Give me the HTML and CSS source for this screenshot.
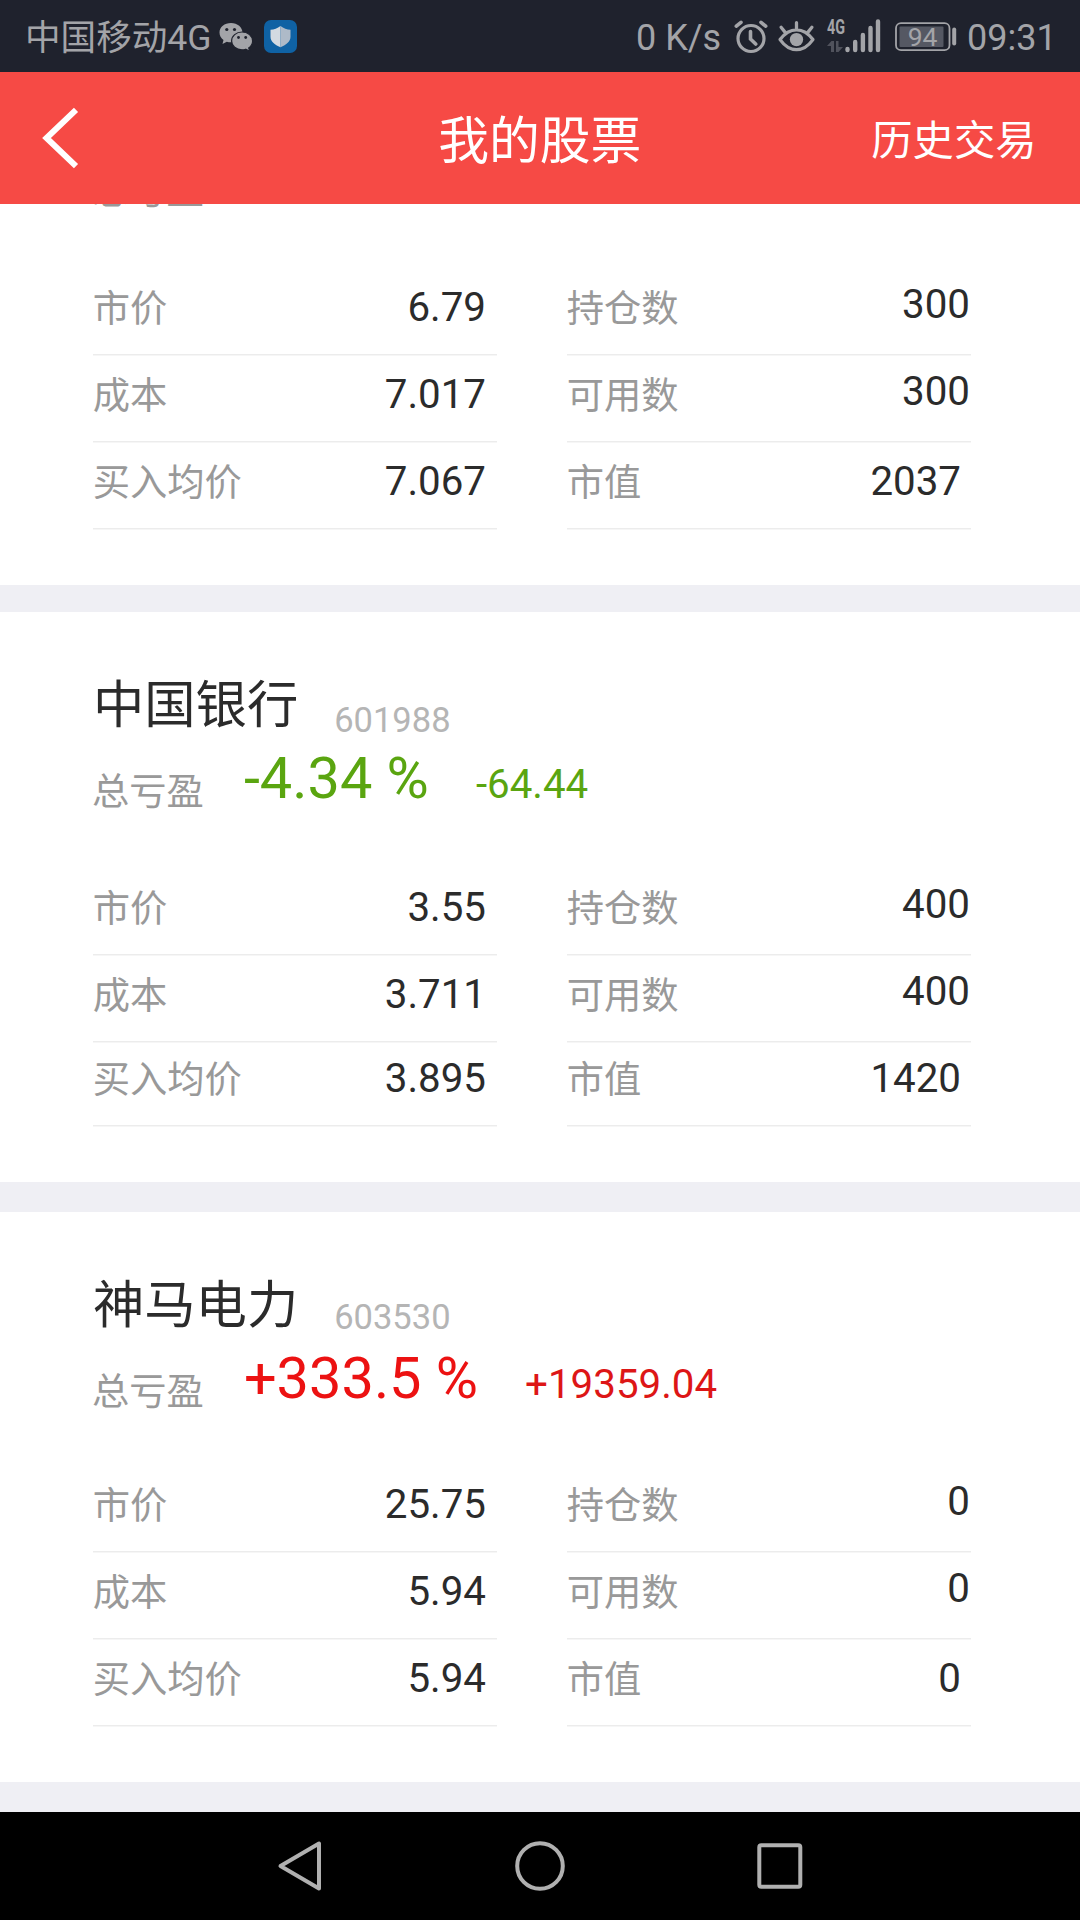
FILE: index.html
```html
<!DOCTYPE html>
<html lang="zh-CN">
<head>
<meta charset="utf-8">
<title>我的股票</title>
<link rel="stylesheet" href="styles.css">
</head>
<body>
<div class="screen">
  <header class="status">
    <div class="status-left">
      <span class="carrier">中国移动4G</span>
      <svg class="wechat" width="34" height="30" viewBox="0 0 34 30">
        <path fill="#a3a4a8" d="M12 1C5.500 1 .5 5.100 .5 10.500c0 3 1.500 5.600 4 7.400L3.500 22l4.300-2.300c1.300.4 2.800.6 4.200.6C18.500 20.300 23.500 16 23.500 10.700S18.500 1 12 1z"/>
        <path fill="#a3a4a8" stroke="#1f222d" stroke-width="1.200" d="M23 10c-5.800 0-10.400 4-10.400 8.900s4.600 8.900 10.400 8.900c1.300 0 2.600-.2 3.700-.6l4 2-1-3.300c2.400-1.700 3.900-4.200 3.900-7C33.600 14 28.800 10 23 10z"/>
        <g fill="#1f222d"><circle cx="7.800" cy="7.500" r="1.600"/><circle cx="15.500" cy="7.500" r="1.600"/><circle cx="19.500" cy="15.500" r="1.400"/><circle cx="26.700" cy="15.500" r="1.400"/></g>
      </svg>
      <svg class="shield" width="33" height="33" viewBox="0 0 33 33">
        <rect width="33" height="33" rx="7" fill="#0f62a4"/>
        <path fill="#d3dae1" d="M16.500 6C13.500 8.500 10 9.500 6.500 9.700v7c0 4.700 4 8 10 10.600z"/>
        <path fill="#aebac8" d="M16.500 6c3 2.500 6.500 3.500 10 3.700v7c0 4.700-4 8-10 10.600z"/>
      </svg>
    </div>
    <div class="status-right">
      <span class="speed">0 K/s</span>
      <svg class="alarm" width="34" height="34" viewBox="0 0 34 34" fill="none" stroke="#a3a4a8" stroke-linecap="round">
        <circle cx="17" cy="18.500" r="13" stroke-width="3.200"/>
        <path d="M2.300 6.200 7 2.300M31.700 6.200 27 2.300M16.500 11.500v7.500l5.200 5" stroke-width="3.600"/>
      </svg>
      <svg class="eye" width="37" height="33" viewBox="0 0 36 32">
        <path d="M2 19Q9 9.500 18 9.500T34 19Q27 28.800 18 28.800T2 19zM18 9V2.500M7 12 3 7M29 12l4-5" fill="none" stroke="#a3a4a8" stroke-width="3.200" stroke-linecap="round" stroke-linejoin="round"/>
        <circle cx="18" cy="19" r="6.500" fill="#a3a4a8"/>
      </svg>
      <svg class="signal" width="54" height="34" viewBox="0 0 54 34">
        <text class="net" x="0" y="15" textLength="18" lengthAdjust="spacingAndGlyphs">4G</text>
        <path fill="#50525c" d="M0 27l4.500-5H7v11H4v-6zM9 22h2.500v6H16l-4.500 5H9z"/>
        <path stroke="#a3a4a8" stroke-width="4.400" stroke-linecap="round" d="M20.500 30v1M28.200 23v8M35.900 16v15M43.500 9v22M51 2.500V31"/>
      </svg>
      <svg class="battery" width="62" height="30" viewBox="0 0 62 30">
        <rect x="1" y="1.200" width="53.500" height="27" rx="5" fill="none" stroke="#a3a4a8" stroke-width="1.800"/>
        <rect x="4.500" y="4.500" width="44" height="20.500" rx="1" fill="#555863"/>
        <path d="M59.200 7.500v14" stroke="#a3a4a8" stroke-width="4" stroke-linecap="round"/>
        <text class="level" x="12.700" y="23.800">94</text>
      </svg>
      <span class="clock">09:31</span>
    </div>
  </header>

  <nav class="appbar">
    <svg class="back" width="44" height="64" viewBox="0 0 44 64"><path d="M34 3.800 4.500 32l29.500 28.200" fill="none" stroke="#fff" stroke-width="6"/></svg>
    <h1 class="title">我的股票</h1>
    <span class="history">历史交易</span>
  </nav>

  <main class="list">
    <section class="card card-first">
      <div class="profit"><span class="profit-label">总亏盈</span></div>
      <div class="grid">
        <div class="row"><span>市价</span><b>6.79&nbsp;</b></div>
        <div class="row"><span>持仓数</span><b class="count">300</b></div>
        <div class="row"><span>成本</span><b>7.017&nbsp;</b></div>
        <div class="row"><span>可用数</span><b class="count">300</b></div>
        <div class="row"><span>买入均价</span><b>7.067&nbsp;</b></div>
        <div class="row"><span>市值</span><b class="total">2037&nbsp;</b></div>
      </div>
    </section>
    <section class="card card-short">
      <div class="name-line"><h2>中国银行</h2><span class="code">601988</span></div>
      <div class="profit down"><span class="profit-label">总亏盈</span><strong>-4.34 %</strong><em>-64.44</em></div>
      <div class="grid">
        <div class="row"><span>市价</span><b>3.55&nbsp;</b></div>
        <div class="row"><span>持仓数</span><b class="count">400</b></div>
        <div class="row"><span>成本</span><b>3.711&nbsp;</b></div>
        <div class="row"><span>可用数</span><b class="count">400</b></div>
        <div class="row"><span>买入均价</span><b>3.895&nbsp;</b></div>
        <div class="row"><span>市值</span><b class="total">1420&nbsp;</b></div>
      </div>
    </section>
    <section class="card card-raised">
      <div class="name-line"><h2>神马电力</h2><span class="code">603530</span></div>
      <div class="profit up"><span class="profit-label">总亏盈</span><strong>+333.5 %</strong><em>+19359.04</em></div>
      <div class="grid">
        <div class="row"><span>市价</span><b>25.75&nbsp;</b></div>
        <div class="row"><span>持仓数</span><b class="count">0</b></div>
        <div class="row"><span>成本</span><b>5.94&nbsp;</b></div>
        <div class="row"><span>可用数</span><b class="count">0</b></div>
        <div class="row"><span>买入均价</span><b>5.94&nbsp;</b></div>
        <div class="row"><span>市值</span><b class="total">0&nbsp;</b></div>
      </div>
    </section>
  </main>

  <footer class="navbar">
    <svg width="46" height="52" viewBox="0 0 46 52"><path d="M42 3.500v45L3.500 26z" /></svg>
    <svg width="50" height="52" viewBox="0 0 50 52"><circle cx="25" cy="26" r="22.800"/></svg>
    <svg width="46" height="52" viewBox="0 0 46 52"><rect x="2.300" y="5.200" width="41" height="41.500" rx="2"/></svg>
  </footer>
</div>
</body>
</html>
```
FILE: styles.css
```css
* { box-sizing: border-box; }
body {
  margin: 0;
  font-family: Roboto, "Noto Sans CJK SC", sans-serif;
  background: #efeff4;
}
.screen {
  width: 1080px;
  height: 1920px;
  overflow: hidden;
  display: flex;
  flex-direction: column;
}
svg { display: block; flex: none; }
h1, h2, b, strong, em { font-weight: 400; font-style: normal; margin: 0; }

.status {
  height: 72px;
  flex: none;
  background: #1f222d;
  color: #a3a4a8;
  font-size: 36px;
  line-height: 72px;
  display: flex;
  justify-content: space-between;
  padding: 1px 26px 0 25px;
  white-space: nowrap;
}
.status-left, .status-right { display: flex; }
.carrier { width: 194px; margin-top: 1px; font-size: 35.6px; }
.wechat { margin-top: 21px; }
.shield { margin: 19px 0 0 11px; }
.speed { width: 98px; margin-top: 1px; }
.alarm { margin-top: 19px; }
.eye { margin: 19px 0 0 10px; }
.signal { margin: 18px 0 0 12px; overflow: visible; }
.battery { margin: 21px 0 0 14px; }
.clock { width: 87px; margin: 1px 0 0 10px; }
.net { font: 700 20px Roboto, sans-serif; fill: #a3a4a8; }
.level { font: 400 26.5px Roboto, sans-serif; fill: #a3a4a8; }

.appbar {
  height: 132px;
  flex: none;
  background: #f64a45;
  color: #fff;
  display: grid;
  grid-template-columns: 1fr auto 1fr;
  align-items: center;
  padding: 0 43.5px 0 42px;
}
.title { font-size: 50.8px; line-height: 70px; padding: 7px 0 0 1px; }
.history { font-size: 41.3px; line-height: 60px; padding-top: 5px; justify-self: end; }

.list { flex: 1; overflow: hidden; display: flex; flex-direction: column; }
.card {
  flex: none;
  height: 570px;
  margin-bottom: 30px;
  background: #fff;
  padding: 54px 93px 0;
}
.card-first { height: 381px; margin-bottom: 27px; padding-top: 0; }

.name-line { display: flex; height: 80px; }
h2 { font-size: 51.3px; line-height: 80px; color: #2b2b2b; }
.code { font-size: 34.5px; line-height: 40px; color: #b5b5b5; margin: 34px 0 0 36px; }
.card-raised .code { margin-top: 31px; }

.profit { display: flex; height: 79px; }
.profit-label { font-size: 37.3px; line-height: 54px; color: #999; margin: 19px 0 0 -1px; }
.profit strong { font-size: 57.7px; line-height: 66px; margin: -1px 0 0 40px; }
.profit em { font-size: 40.3px; line-height: 48px; margin: 15px 0 0 47px; }
.down { color: #5aa510; }
.up { color: #ec1212; }
.up em { color: #dd1616; }
.card-first .profit { height: 65px; margin-top: -1px; }
.card-first .profit-label { margin-top: -39px; }

.grid {
  display: grid;
  grid-template-columns: 404px 404px;
  grid-template-rows: 86px 86px 86px;
  gap: 1px 70px;
  margin-top: 44px;
}
.card-first .grid { margin-top: 1px; }
.card-short .grid { grid-template-rows: 86px 86px 83px; }
.card-raised .grid { margin-top: 41px; }
.row {
  display: flex;
  justify-content: space-between;
  align-items: flex-end;
  border-bottom: 1px solid #ececec;
  box-shadow: 0 1px #f6f6f6;
}
.row span { font-size: 37.3px; line-height: 54px; color: #999; padding-bottom: 18px; margin-left: -0.3px; }
.row b { font-size: 40.3px; line-height: 48px; color: #2b2b2b; padding: 0 1px 22px 0; }
.row .count { padding-bottom: 25px; }
.row .total { padding-right: 0; }

.navbar {
  height: 108px;
  flex: none;
  background: #000;
  display: flex;
  align-items: center;
  justify-content: center;
  gap: 192px;
}
.navbar path, .navbar circle, .navbar rect {
  fill: none;
  stroke: #b0b0b0;
  stroke-width: 4;
  stroke-linejoin: round;
}
```
